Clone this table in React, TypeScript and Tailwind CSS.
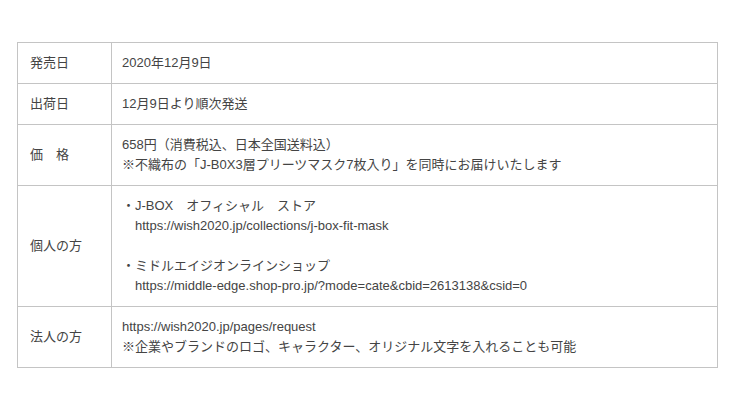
const ROWS: { label: string; lines: string[] }[] = [
  { label: "発売日", lines: ["2020年12月9日"] },
  { label: "出荷日", lines: ["12月9日より順次発送"] },
  {
    label: "価　格",
    lines: [
      "658円（消費税込、日本全国送料込）",
      "※不織布の「J-B0X3層プリーツマスク7枚入り」を同時にお届けいたします",
    ],
  },
  {
    label: "個人の方",
    lines: [
      "・J-BOX　オフィシャル　ストア",
      "　https://wish2020.jp/collections/j-box-fit-mask",
      "",
      "・ミドルエイジオンラインショップ",
      "　https://middle-edge.shop-pro.jp/?mode=cate&cbid=2613138&csid=0",
    ],
  },
  {
    label: "法人の方",
    lines: [
      "https://wish2020.jp/pages/request",
      "※企業やブランドのロゴ、キャラクター、オリジナル文字を入れることも可能",
    ],
  },
];

export default function App() {
  return (
    <div
      className="w-[740px] h-[408px] bg-white pt-[42px] pl-[17px]"
      style={{ fontFamily: '"Liberation Sans", "Noto Sans CJK JP", sans-serif' }}
    >
      <table className="w-[701px] border-collapse text-[13px] leading-[20px] text-[#444]">
        <tbody>
          {ROWS.map((row) => (
            <tr key={row.label}>
              <td className="w-[94px] border border-[#c4c4c4] px-[12px] py-[10px] align-middle">
                {row.label}
              </td>
              <td className="border border-[#c4c4c4] px-[10px] py-[10px] align-middle">
                {row.lines.map((line, i) => (
                  <div key={i} className="h-[20px] whitespace-pre">
                    {line}
                  </div>
                ))}
              </td>
            </tr>
          ))}
        </tbody>
      </table>
    </div>
  );
}
